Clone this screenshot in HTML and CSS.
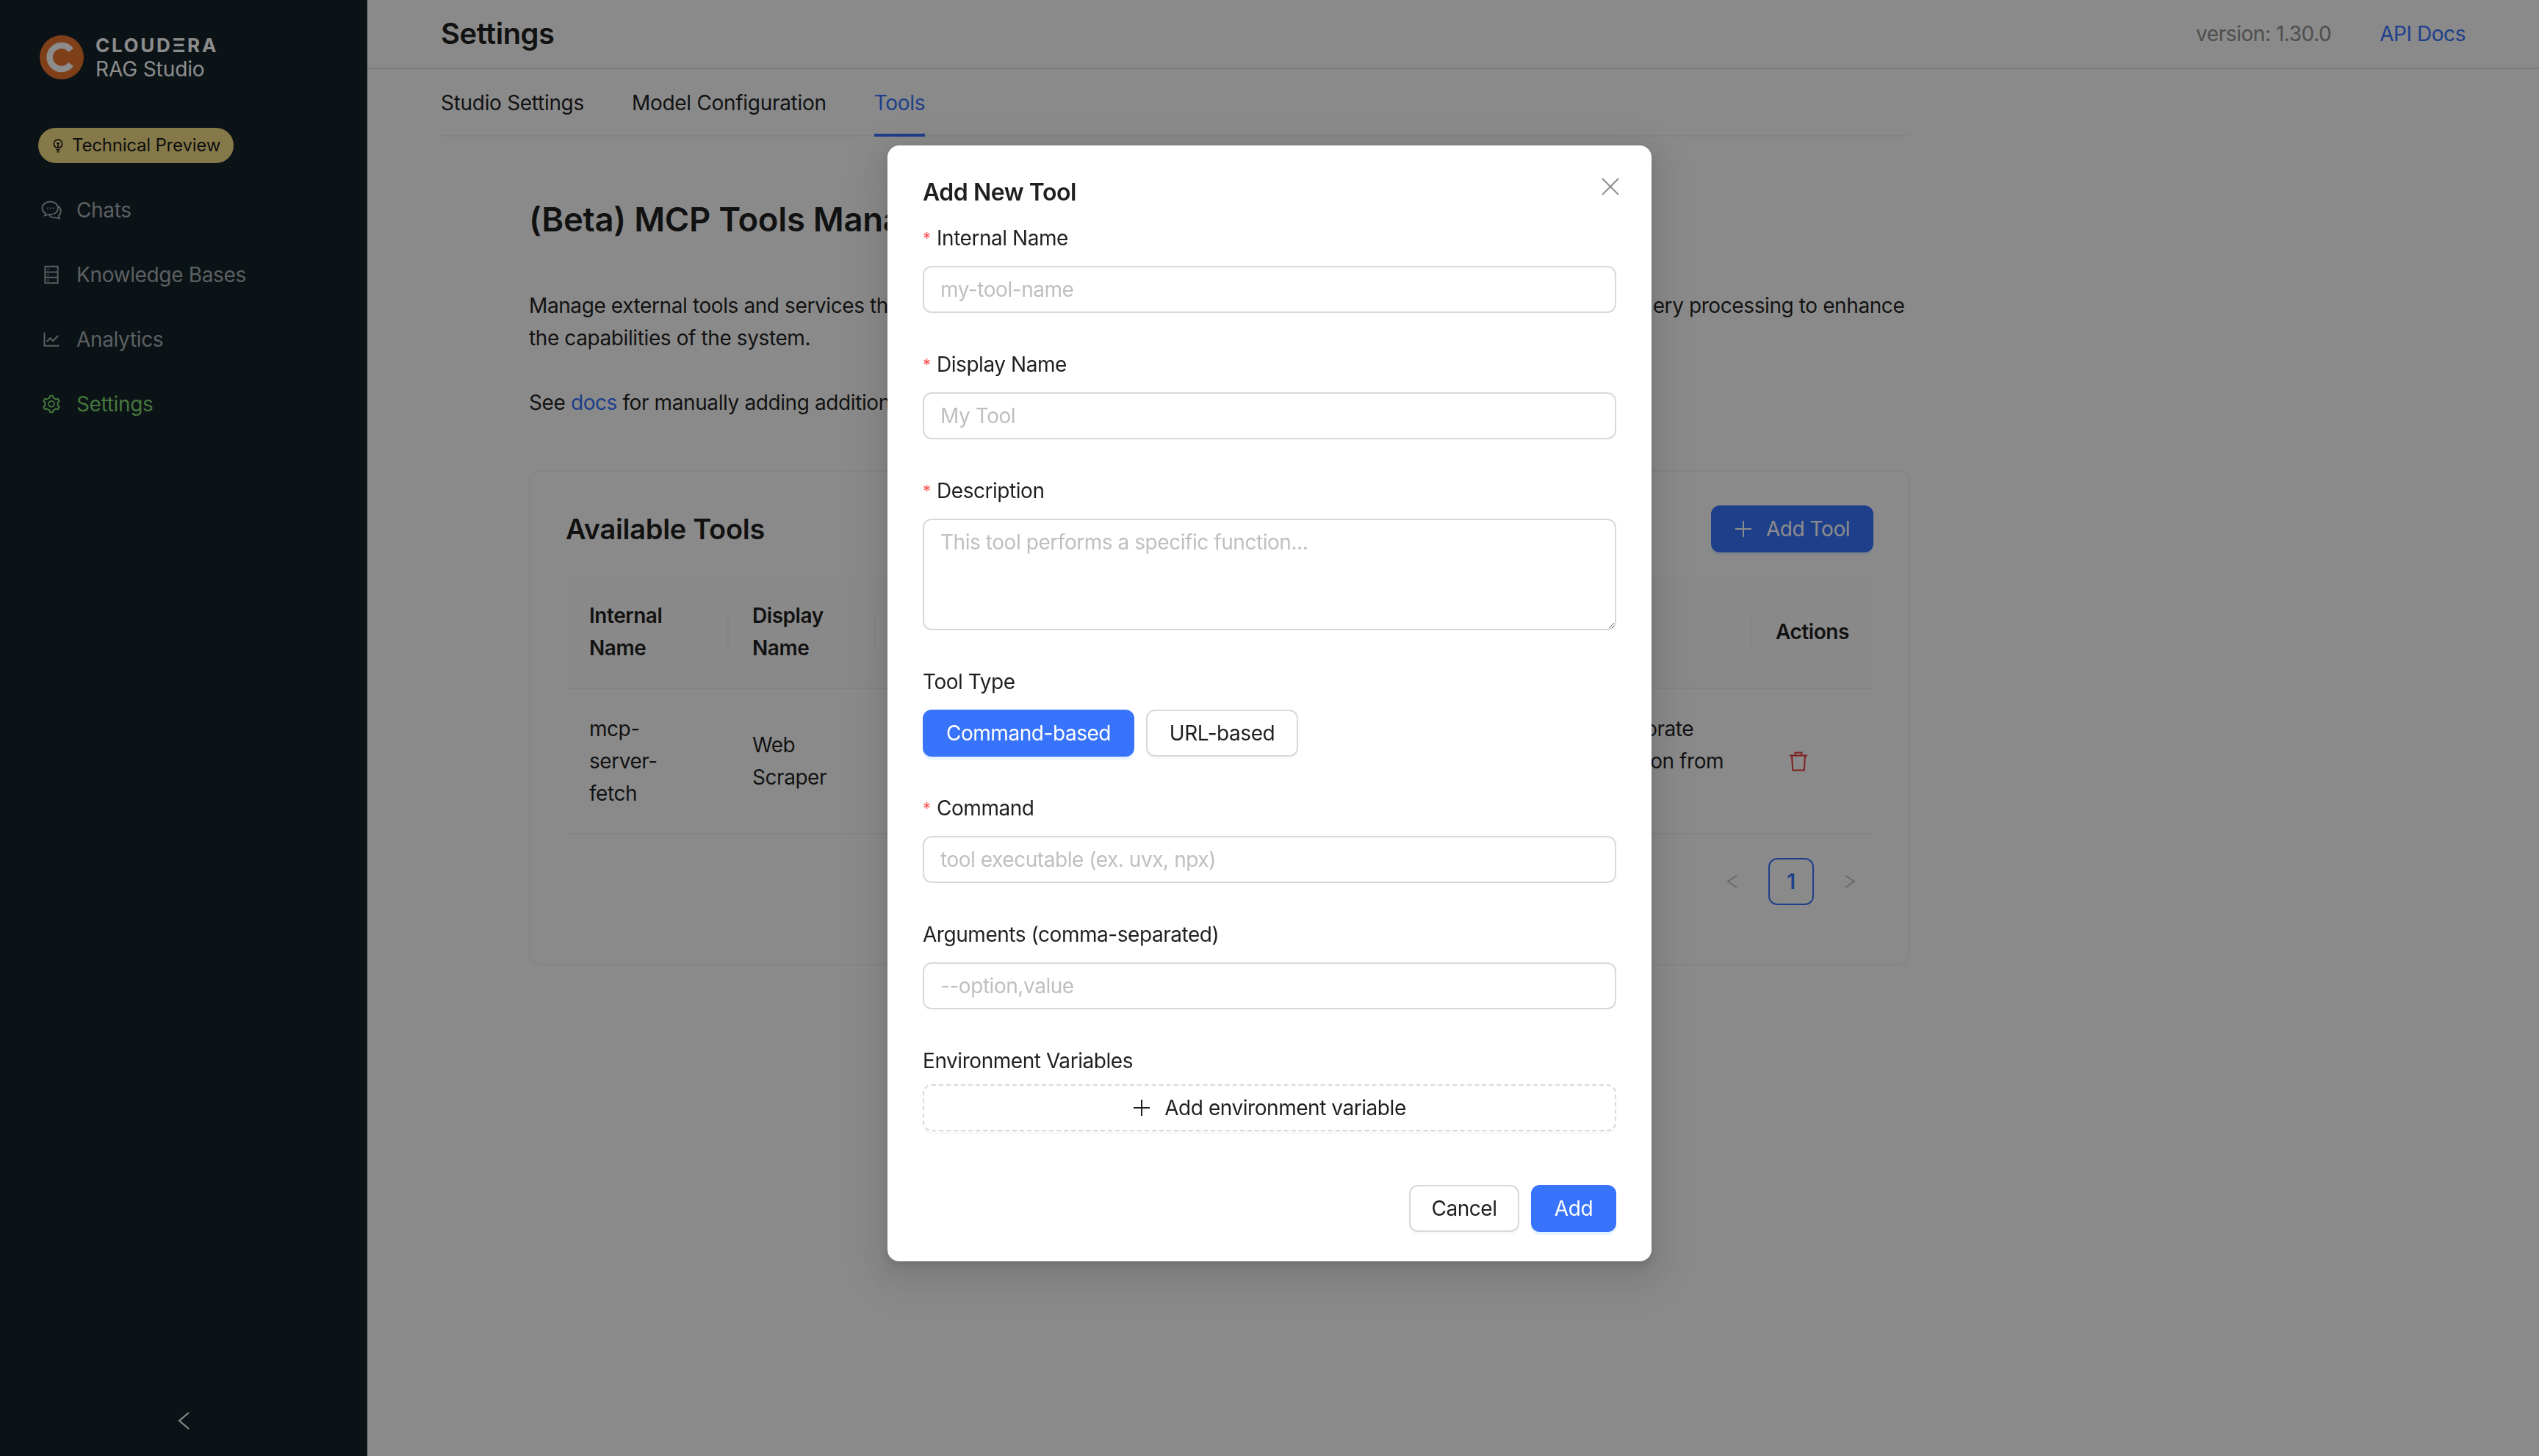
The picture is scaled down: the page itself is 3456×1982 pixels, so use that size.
FILE: index.html
```html
<!DOCTYPE html>
<html lang="en">
<head>
    <meta charset="UTF-8">
    <title>RAG Studio - Settings</title>
    <link rel="stylesheet" href="styles.css">
</head>
<body>
<div class="app">
    <!-- Sidebar -->
    <aside class="sidebar">
        <div class="brand">
            <svg class="brand-mark" viewBox="0 0 60 60"><circle cx="30" cy="30" r="30" fill="#e8742c"/><path d="M42.5 20.5A16 16 0 1 0 42.5 39.5" fill="none" stroke="#fff" stroke-width="8.5"/></svg>
            <div class="brand-text">
                <div class="brand-name">CLOUD&#926;RA</div>
                <div class="brand-sub">RAG Studio</div>
            </div>
        </div>
        <div class="preview-badge">
            <svg class="bulb" viewBox="0 0 16 24" fill="none" stroke="#141414" stroke-width="2"><path d="M4.5 15.5C2.5 14 1.2 11.800 1.200 9.300A6.800 6.800 0 0 1 14.800 9.300C14.800 11.800 13.500 14 11.500 15.500Z"/><path d="M5 19h6M6 22.500h4M5.500 8.500h5M8 9v6"/></svg>
            <span>Technical Preview</span>
        </div>
        <nav class="menu">
            <a class="menu-item">
                <svg class="menu-icon" viewBox="0 0 28 28" fill="none" stroke="currentColor" stroke-width="1.800"><path d="M12.500 2.500C6.500 2.500 1.500 6.300 1.500 11.300C1.500 14.300 3.300 16.900 6 18.500L5 21.500L10 20C10.800 20.100 11.700 20.200 12.500 20.200C18.500 20.200 23 16.300 23 11.300C23 6.300 18.500 2.500 12.500 2.500Z"/><path d="M23.500 8.500C25.500 10.300 26.800 12.800 26.800 15.300C26.800 18 25.500 20.300 23.800 21.800L25 25.500L19.500 24.200C16 24.800 12.800 23.300 11 21" /><path d="M8.200 11.500h1.500M12 11.500h1.500M15.800 11.500h1.500"/></svg>
                Chats
            </a>
            <a class="menu-item">
                <svg class="menu-icon" viewBox="0 0 1024 1024" fill="currentColor"><path d="M832 64H192c-17.700 0-32 14.300-32 32v832c0 17.700 14.300 32 32 32h640c17.700 0 32-14.300 32-32V96c0-17.700-14.300-32-32-32zm-600 72h560v208H232V136zm560 480H232V408h560v208zm0 272H232V680h560v208zM304 240a40 40 0 1 0 80 0 40 40 0 1 0-80 0zm0 272a40 40 0 1 0 80 0 40 40 0 1 0-80 0zm0 272a40 40 0 1 0 80 0 40 40 0 1 0-80 0z"/></svg>
                Knowledge Bases
            </a>
            <a class="menu-item">
                <svg class="menu-icon" viewBox="0 0 1024 1024" fill="currentColor"><path d="M888 792H200V168c0-4.400-3.600-8-8-8h-56c-4.400 0-8 3.600-8 8v688c0 4.400 3.600 8 8 8h752c4.400 0 8-3.600 8-8v-56c0-4.400-3.600-8-8-8zM305.800 637.700c3.100 3.100 8.100 3.100 11.300 0l138.300-137.600L583 628.500c3.100 3.100 8.200 3.100 11.300 0l275.400-275.300c3.100-3.100 3.100-8.200 0-11.300l-39.600-39.600a8.030 8.030 0 0 0-11.300 0l-230 229.900L461.400 404a8.030 8.030 0 0 0-11.300 0L266.300 586.700a8.030 8.030 0 0 0 0 11.400l39.500 39.600z"/></svg>
                Analytics
            </a>
            <a class="menu-item active">
                <svg class="menu-icon" viewBox="0 0 1024 1024" fill="currentColor"><path d="M924.800 625.700l-65.500-56c3.100-19 4.700-38.400 4.700-57.800s-1.600-38.800-4.700-57.800l65.500-56a32.030 32.030 0 0 0 9.300-35.200l-.9-2.600a443.740 443.740 0 0 0-79.700-137.900l-1.800-2.100a32.120 32.120 0 0 0-35.100-9.500l-81.300 28.900c-30-24.600-63.500-44-99.700-57.600l-15.700-85a32.050 32.050 0 0 0-25.800-25.700l-2.700-.5c-52.100-9.400-106.900-9.400-159 0l-2.700.5a32.050 32.050 0 0 0-25.800 25.700l-15.800 85.400a351.860 351.860 0 0 0-99 57.400l-81.900-29.100a32 32 0 0 0-35.100 9.500l-1.800 2.100a446.020 446.020 0 0 0-79.700 137.900l-.9 2.600c-4.500 12.500-.8 26.500 9.300 35.200l66.300 56.600c-3.100 18.800-4.600 38-4.600 57.100 0 19.200 1.500 38.400 4.600 57.100L99 625.500a32.030 32.030 0 0 0-9.300 35.200l.9 2.600c18.100 50.400 44.900 96.900 79.700 137.900l1.800 2.100a32.120 32.120 0 0 0 35.100 9.500l81.900-29.100c29.800 24.500 63.100 43.900 99 57.400l15.800 85.400a32.050 32.050 0 0 0 25.800 25.700l2.700.5a449.400 449.400 0 0 0 159 0l2.700-.5a32.050 32.050 0 0 0 25.800-25.700l15.700-85a350 350 0 0 0 99.700-57.600l81.300 28.900a32 32 0 0 0 35.100-9.500l1.800-2.100c34.800-41.100 61.600-87.500 79.700-137.900l.9-2.600c4.500-12.300.8-26.300-9.300-35zM788.300 465.900c2.500 15.100 3.800 30.600 3.800 46.100s-1.300 31-3.800 46.100l-6.600 40.100 74.700 63.900a370.030 370.030 0 0 1-42.600 73.600L721 702.800l-31.400 25.800c-23.900 19.600-50.500 35-79.300 45.800l-38.100 14.300-17.900 97a377.500 377.500 0 0 1-85 0l-17.900-97.200-37.800-14.500c-28.500-10.800-55-26.200-78.700-45.700l-31.400-25.900-93.400 33.200c-17-22.900-31.200-47.600-42.600-73.600l75.500-64.500-6.500-40c-2.400-14.900-3.700-30.300-3.700-45.500 0-15.300 1.200-30.600 3.700-45.500l6.500-40-75.500-64.500c11.300-26.100 25.600-50.700 42.600-73.600l93.400 33.200 31.400-25.900c23.700-19.500 50.200-34.900 78.700-45.700l37.900-14.300 17.900-97.200c28.100-3.200 56.800-3.200 85 0l17.900 97 38.100 14.300c28.700 10.800 55.400 26.200 79.300 45.800l31.400 25.800 92.800-32.900c17 22.900 31.200 47.600 42.600 73.600L781.800 426l6.500 39.900zM512 326c-97.200 0-176 78.800-176 176s78.800 176 176 176 176-78.800 176-176-78.800-176-176-176zm79.200 255.200A111.600 111.600 0 0 1 512 614c-29.900 0-58-11.700-79.200-32.800A111.600 111.600 0 0 1 400 502c0-29.900 11.700-58 32.800-79.200C454 401.600 482.100 390 512 390c29.900 0 58 11.600 79.200 32.800A111.600 111.600 0 0 1 624 502c0 29.900-11.700 58-32.800 79.200z"/></svg>
                Settings
            </a>
        </nav>
        <div class="collapse-trigger">
            <svg width="16" height="24" viewBox="0 0 16 24" fill="none" stroke="#fff" stroke-width="2"><path d="M15 1L2 12L15 23"/></svg>
        </div>
    </aside>

    <!-- Main page behind the modal -->
    <main class="main">
        <header class="topbar">
            <h1 class="page-title">Settings</h1>
            <div class="topbar-right">
                <span class="version">version: 1.30.0</span>
                <a class="link">API Docs</a>
            </div>
        </header>
        <div class="content">
            <div class="tabs">
                <span class="tab">Studio Settings</span>
                <span class="tab">Model Configuration</span>
                <span class="tab tab-active">Tools</span>
            </div>
            <section class="tools-page">
                <h2 class="tools-title">(Beta) MCP Tools Management</h2>
                <p class="tools-text">Manage external tools and services that can be connected to the assistant and then securely used at runtime during query processing to enhance the capabilities of the system.</p>
                <p class="tools-text">See <a class="link">docs</a> for manually adding additional tools and configuring them for your deployment.</p>
                <div class="card">
                    <div class="card-head">
                        <h3 class="card-title">Available Tools</h3>
                        <button class="btn btn-primary btn-add-tool">
                            <svg class="plus" viewBox="0 0 24 24" stroke="currentColor" stroke-width="2"><path d="M12 1v22M1 12h22"/></svg>
                            Add Tool
                        </button>
                    </div>
                    <table class="tools-table">
                        <colgroup><col class="col-name"><col class="col-display"><col class="col-command"><col><col class="col-actions"></colgroup>
                        <thead>
                            <tr><th>Internal Name</th><th>Display Name</th><th>Command</th><th>Description</th><th>Actions</th></tr>
                        </thead>
                        <tbody>
                            <tr>
                                <td>mcp-<br>server-<br>fetch</td>
                                <td>Web Scraper</td>
                                <td>uvx</td>
                                <td>Fetch pages from the web to incorporate<br>current online and external information from<br>public sites</td>
                                <td class="cell-action">
                                    <svg class="trash" viewBox="0 0 26 28" fill="none" stroke="#e53935" stroke-width="2"><path d="M1 6.500h24M8.500 6V2.500h9V6M4 7l1.200 19.500h15.600L22 7"/></svg>
                                </td>
                            </tr>
                        </tbody>
                    </table>
                    <div class="pagination">
                        <svg class="page-arrow" viewBox="0 0 16 20" fill="none" stroke="currentColor" stroke-width="2"><path d="M14 2L2 10L14 18"/></svg>
                        <span class="page-num">1</span>
                        <svg class="page-arrow" viewBox="0 0 16 20" fill="none" stroke="currentColor" stroke-width="2"><path d="M2 2L14 10L2 18"/></svg>
                    </div>
                </div>
            </section>
        </div>
    </main>
</div>

<!-- Add tool modal -->
<div class="mask"></div>
<div class="modal-wrap">
    <div class="modal">
        <svg class="modal-close" viewBox="0 0 24 24" fill="none" stroke="currentColor" stroke-width="2"><path d="M1 1L23 23M23 1L1 23"/></svg>
        <div class="modal-title">Add New Tool</div>
        <form class="tool-form">
            <div class="field">
                <label class="required">Internal Name</label>
                <input class="input" type="text" placeholder="my-tool-name">
            </div>
            <div class="field">
                <label class="required">Display Name</label>
                <input class="input" type="text" placeholder="My Tool">
            </div>
            <div class="field">
                <label class="required">Description</label>
                <textarea class="input textarea" placeholder="This tool performs a specific function..."></textarea>
            </div>
            <div class="field">
                <label>Tool Type</label>
                <div class="type-buttons">
                    <button type="button" class="btn btn-primary btn-type">Command-based</button>
                    <button type="button" class="btn btn-default btn-type">URL-based</button>
                </div>
            </div>
            <div class="field">
                <label class="required">Command</label>
                <input class="input" type="text" placeholder="tool executable (ex. uvx, npx)">
            </div>
            <div class="field">
                <label>Arguments (comma-separated)</label>
                <input class="input" type="text" placeholder="--option,value">
            </div>
            <div class="field-env">
                <label>Environment Variables</label>
                <button type="button" class="btn btn-dashed">
                    <svg class="plus" viewBox="0 0 24 24" stroke="currentColor" stroke-width="2"><path d="M12 1v22M1 12h22"/></svg>
                    Add environment variable
                </button>
            </div>
        </form>
        <div class="modal-footer">
            <button class="btn btn-default btn-cancel">Cancel</button>
            <button class="btn btn-primary btn-ok">Add</button>
        </div>
    </div>
</div>
</body>
</html>
```

FILE: styles.css
```css
* {
    box-sizing: border-box;
}
html, body {
    margin: 0;
    height: 1982px;
    overflow: hidden;
}
body {
    font-family: Inter, "Noto Sans", sans-serif;
    font-size: 28px;
    line-height: 44px;
    letter-spacing: -0.45px;
    color: rgba(0, 0, 0, 0.88);
    background-color: #fcfcfc;
}
.app {
    display: flex;
    height: 1982px;
}

/* sidebar */
.sidebar {
    width: 500px;
    flex-shrink: 0;
    display: flex;
    flex-direction: column;
    background-color: #14232a;
    padding-top: 48px;
}
.brand {
    display: flex;
    align-items: flex-start;
    gap: 16px;
    margin-left: 54px;
    height: 64px;
}
.brand-mark {
    width: 60px;
    height: 60px;
}
.brand-text {
    color: #fff;
}
.brand-name {
    font-size: 26px;
    font-weight: 700;
    line-height: 28px;
    letter-spacing: 2.7px;
}
.brand-sub {
    font-size: 28px;
    line-height: 36px;
    letter-spacing: -0.1px;
}
.preview-badge {
    display: flex;
    align-items: center;
    gap: 12px;
    align-self: flex-start;
    height: 48px;
    margin: 62px 0 20px 52px;
    padding: 0 18px 0 20px;
    border-radius: 24px;
    background-color: #f2dd85;
    font-size: 24px;
    letter-spacing: -0.2px;
    color: #1c1c1c;
}
.bulb {
    width: 14px;
    height: 20px;
}
.menu-item {
    display: flex;
    align-items: center;
    gap: 20px;
    height: 88px;
    padding-left: 56px;
    letter-spacing: -0.35px;
    color: #a8aeb3;
}
.menu-item.active {
    color: #7dd66c;
}
.menu-icon {
    width: 28px;
    height: 28px;
}
.collapse-trigger {
    margin-top: auto;
    height: 96px;
    display: flex;
    align-items: center;
    justify-content: center;
}

/* page behind modal */
.main {
    flex: 1;
    min-width: 0;
}
.topbar {
    height: 94px;
    display: flex;
    align-items: center;
    justify-content: space-between;
    padding: 0 100px;
    border-bottom: 2px solid #e0e0e0;
}
.page-title {
    margin: 0;
    font-size: 40px;
    font-weight: 600;
    letter-spacing: -0.5px;
}
.topbar-right {
    display: flex;
    gap: 66px;
}
.version {
    color: #8f8f8f;
}
.link {
    color: #3873fb;
}
.content {
    width: 2100px;
    padding-left: 100px;
}
.tabs {
    display: flex;
    gap: 65px;
    height: 92px;
    letter-spacing: -0.3px;
    border-bottom: 2px solid #f0f0f0;
}
.tab {
    height: 92px;
    line-height: 92px;
}
.tab-active {
    color: #3873fb;
    border-bottom: 4px solid #3873fb;
}
.tools-page {
    padding-left: 120px;
}
.tools-title {
    margin: 81px 0 63px;
    font-size: 45.5px;
    font-weight: 600;
    line-height: 64px;
    letter-spacing: -0.3px;
}
.tools-text {
    margin: 0 0 44px;
    letter-spacing: -0.4px;
}
.card {
    margin-top: 70px;
    height: 674px;
    padding: 46px 48px 0;
    border: 2px solid #f0f0f0;
    border-radius: 16px;
}
.card-head {
    display: flex;
    align-items: center;
    justify-content: space-between;
    margin-bottom: 32px;
}
.card-title {
    margin: 0;
    font-size: 38px;
    font-weight: 600;
    letter-spacing: -0.3px;
}
.tools-table {
    width: 100%;
    table-layout: fixed;
    border-collapse: separate;
    border-spacing: 0;
}
.col-name {
    width: 222px;
}
.col-display {
    width: 200px;
}
.col-command {
    width: 559px;
}
.col-actions {
    width: 165px;
}
.tools-table th, .tools-table td {
    padding: 32px;
    text-align: left;
    border-bottom: 2px solid #f0f0f0;
}
.tools-table th {
    position: relative;
    font-weight: 600;
    background-color: #fafafa;
}
.tools-table th:first-child {
    border-top-left-radius: 16px;
}
.tools-table th:last-child {
    border-top-right-radius: 16px;
}
.tools-table th:not(:last-child)::after {
    content: "";
    position: absolute;
    right: 0;
    top: 50%;
    width: 2px;
    height: 44px;
    margin-top: -22px;
    background-color: #f0f0f0;
}
.trash {
    display: block;
    width: 26px;
    height: 28px;
    margin-left: 18px;
}
.pagination {
    display: flex;
    align-items: center;
    justify-content: flex-end;
    gap: 41px;
    margin-top: 32px;
    padding-right: 24px;
    color: #bfbfbf;
}
.page-arrow {
    width: 16px;
    height: 20px;
}
.page-num {
    width: 62px;
    height: 64px;
    border: 2px solid #3873fb;
    border-radius: 12px;
    color: #3873fb;
    font-weight: 600;
    line-height: 60px;
    text-align: center;
}

/* buttons */
.btn {
    display: inline-flex;
    align-items: center;
    justify-content: center;
    height: 64px;
    padding: 0;
    border-radius: 12px;
    border: 2px solid transparent;
    font-family: inherit;
    font-size: 28px;
    letter-spacing: inherit;
}
.btn-primary {
    background-color: #3873fb;
    color: #fff;
    box-shadow: 0 4px 0 rgba(5, 145, 255, 0.1);
}
.btn-default {
    background-color: #fff;
    border-color: #d9d9d9;
    color: rgba(0, 0, 0, 0.88);
    box-shadow: 0 4px 0 rgba(0, 0, 0, 0.02);
}
.btn-dashed {
    width: 100%;
    background-color: #fff;
    border: 2px dashed #d9d9d9;
    color: rgba(0, 0, 0, 0.88);
    gap: 19px;
    box-shadow: 0 4px 0 rgba(0, 0, 0, 0.02);
}
.btn-add-tool {
    width: 221px;
    gap: 19px;
}
.plus {
    width: 24px;
    height: 24px;
}
.btn-type:first-child {
    width: 288px;
}
.btn-type:last-child {
    width: 207px;
}
.btn-cancel {
    width: 150px;
}
.btn-ok {
    width: 116px;
}

/* modal */
.mask {
    position: fixed;
    inset: 0;
    background-color: rgba(0, 0, 0, 0.45);
}
.modal-wrap {
    position: fixed;
    inset: 0;
    display: flex;
    justify-content: center;
    align-items: flex-start;
    padding-top: 198px;
}
.modal {
    position: relative;
    width: 1040px;
    padding: 40px 48px;
    background-color: #fff;
    border-radius: 16px;
    box-shadow: 0 12px 32px 16px rgba(0, 0, 0, 0.05), 0 6px 12px rgba(0, 0, 0, 0.12), 0 18px 56px 32px rgba(0, 0, 0, 0.05);
}
.modal-close {
    position: absolute;
    top: 44px;
    right: 44px;
    width: 24px;
    height: 24px;
    color: rgba(0, 0, 0, 0.45);
}
.modal-title {
    font-size: 32px;
    font-weight: 600;
    line-height: 48px;
    margin-bottom: 16px;
}
.field {
    margin-bottom: 48px;
}
.field label, .field-env label {
    display: block;
    height: 44px;
}
.field label {
    margin-bottom: 16px;
}
.field-env label {
    margin-bottom: 10px;
}
.required::before {
    content: "*";
    display: inline-block;
    width: 19px;
    color: #ff4d4f;
    font-size: 22px;
    vertical-align: 2px;
}
.input {
    display: block;
    width: 100%;
    height: 64px;
    padding: 0 22px;
    border: 2px solid #d9d9d9;
    border-radius: 12px;
    font-family: inherit;
    font-size: 28px;
    letter-spacing: inherit;
    color: rgba(0, 0, 0, 0.88);
    background-color: #fff;
}
.input::placeholder {
    color: #bfbfbf;
    opacity: 1;
}
.textarea {
    height: 152px;
    padding: 8px 22px;
    line-height: 44px;
}
.type-buttons {
    display: flex;
    gap: 16px;
}
.modal-footer {
    display: flex;
    justify-content: flex-end;
    gap: 16px;
    margin-top: 73px;
}
```
